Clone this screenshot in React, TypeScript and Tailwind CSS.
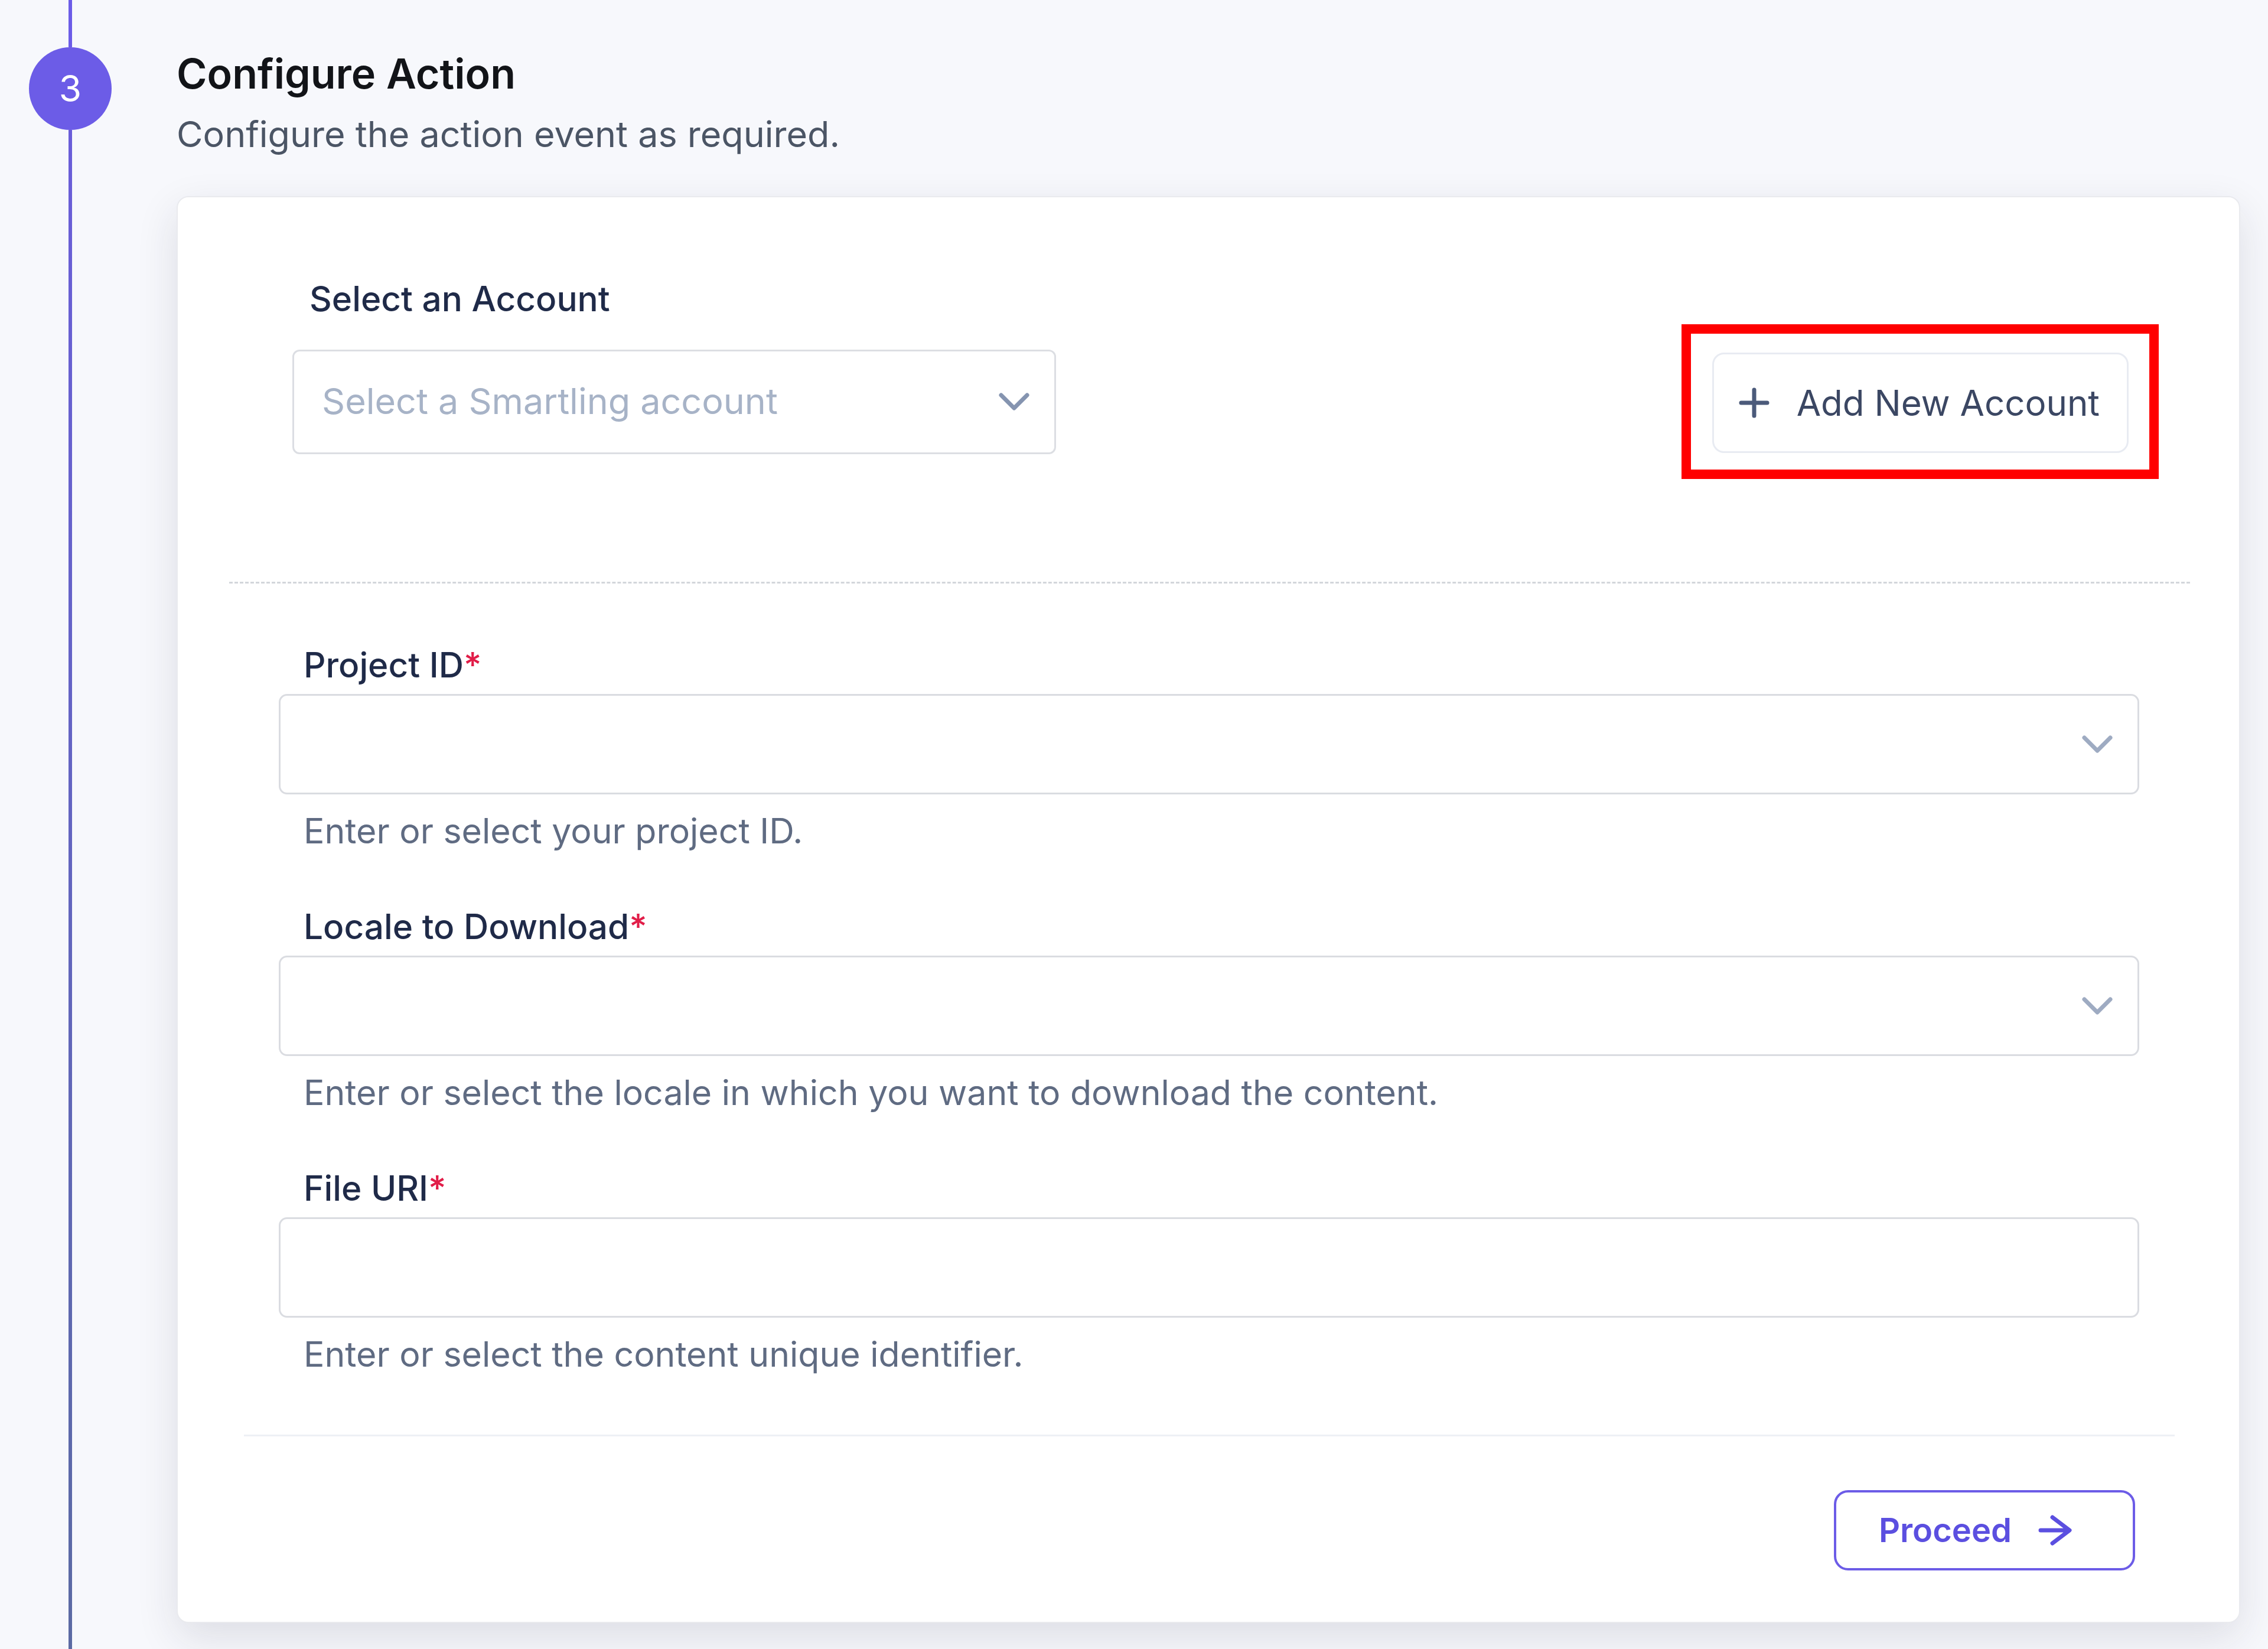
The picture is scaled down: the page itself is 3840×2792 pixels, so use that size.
import React from "react";

const Chevron = ({ color }: { color: string }) => (
  <svg width="56" height="36" viewBox="0 0 56 36" fill="none">
    <path
      d="M6 7 L28 29 L50 7"
      stroke={color}
      strokeWidth="7"
      strokeLinecap="round"
      strokeLinejoin="round"
    />
  </svg>
);

const PlusIcon = () => (
  <svg width="52" height="52" viewBox="0 0 52 52" fill="none">
    <path
      d="M26 4 V48 M4 26 H48"
      stroke="#4b5a7a"
      strokeWidth="7"
      strokeLinecap="round"
    />
  </svg>
);

const ArrowIcon = () => (
  <svg width="58" height="52" viewBox="0 0 58 52" fill="none">
    <path
      d="M4 26 H52 M24 4 L53 26 L24 48"
      stroke="#5b4fe0"
      strokeWidth="7"
      strokeLinecap="round"
      strokeLinejoin="round"
    />
  </svg>
);

type FieldProps = {
  label: string;
  helper: string;
  select?: boolean;
};

const Field = ({ label, helper, select }: FieldProps) => (
  <div>
    <label className="block pl-[42px] text-[58.5px] leading-[72px] font-medium text-[#1f2a48]">
      {label}
      <span className="text-[#e11d48]">*</span>
    </label>
    <div className="mt-[13px] h-[170px] rounded-[14px] border-[3px] border-[#dadce1] bg-white flex items-center justify-end pr-[40px]">
      {select && <Chevron color="#9eabc2" />}
    </div>
    <p className="mt-[26px] pl-[42px] text-[59px] leading-[72px] text-[#5f6b82]">
      {helper}
    </p>
  </div>
);

const App = () => {
  return (
    <div className="w-full h-[2792px] overflow-hidden bg-[#f7f8fc] flex font-[Inter,sans-serif]">
      {/* timeline */}
      <div className="w-[238px] shrink-0 flex flex-col items-center">
        <div className="w-[6px] h-[80px] bg-[#6c5ce7]" />
        <div className="w-[140px] h-[140px] rounded-full bg-[#6c5ce7] flex items-center justify-center text-white text-[62px] leading-none">
          3
        </div>
        <div className="w-[6px] flex-1 bg-gradient-to-b from-[#6a5dd9] to-[#5b6aa3]" />
      </div>

      {/* content */}
      <div className="flex-1 pl-[61px] pr-[47px]">
        <h2 className="mt-[83px] text-[70px] leading-[84px] font-semibold text-[#121418]">
          Configure Action
        </h2>
        <p className="mt-[24px] text-[61px] leading-[72px] text-[#4b5565]">
          Configure the action event as required.
        </p>

        <div className="mt-[69px] bg-white rounded-[20px] border-2 border-[#e9eaee] shadow-[0_24px_70px_rgba(30,35,60,0.12)]">
          {/* account row */}
          <div className="pt-[136px] pl-[194px] pr-[136px]">
            <div className="pl-[29px] text-[58.5px] leading-[72px] font-medium text-[#1f2a48]">
              Select an Account
            </div>
            <div className="mt-[7px] flex items-center justify-between">
              <div className="w-[1293px] h-[177px] rounded-[12px] border-[3px] border-[#dcdee3] flex items-center justify-between pl-[47px] pr-[40px]">
                <span className="text-[61px] text-[#a7b3c7]">
                  Select a Smartling account
                </span>
                <Chevron color="#8594b0" />
              </div>
              <div className="border-[16px] border-[#ff0000] pt-[32px] pb-[28px] pl-[36px] pr-[35px]">
                <button
                  type="button"
                  className="h-[170px] rounded-[20px] border-[3px] border-[#e8ebf2] bg-white flex items-center pl-[42px] pr-[46px] gap-[46px]"
                >
                  <PlusIcon />
                  <span className="text-[60px] text-[#3b4763]">
                    Add New Account
                  </span>
                </button>
              </div>
            </div>
          </div>

          <div className="mt-[174px] ml-[87px] mr-[83px] border-t-[3px] border-dashed border-[#d3d6db]" />

          {/* form */}
          <div className="pt-[102px] pl-[171px] pr-[169px] flex flex-col gap-[90px]">
            <Field
              label="Project ID"
              helper="Enter or select your project ID."
              select
            />
            <Field
              label="Locale to Download"
              helper="Enter or select the locale in which you want to download the content."
              select
            />
            <Field
              label="File URI"
              helper="Enter or select the content unique identifier."
            />
          </div>

          <div className="mt-[100px] ml-[112px] mr-[109px] border-t-[3px] border-[#eef0f5]" />

          <div className="pt-[91px] pb-[87px] pr-[176px] flex justify-end">
            <button
              type="button"
              className="w-[510px] h-[136px] rounded-[24px] border-4 border-[#6c5ce7] bg-white flex items-center pl-[72px] gap-[45px]"
            >
              <span className="text-[56px] font-semibold text-[#5b4fe0]">
                Proceed
              </span>
              <ArrowIcon />
            </button>
          </div>
        </div>
      </div>
    </div>
  );
};

export default App;
